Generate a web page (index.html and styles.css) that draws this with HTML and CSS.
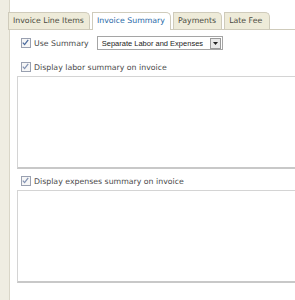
FILE: index.html
```html
<!DOCTYPE html>
<html lang="en">
<head>
  <meta charset="UTF-8" />
  <title>Invoice Summary</title>
  <link rel="stylesheet" href="styles.css">
</head>
<body>
  <div class="page">
    <div class="sidebar"></div>
    <div class="main">
      <ul class="tabs">
        <li class="tab">Invoice Line Items</li>
        <li class="tab active">Invoice Summary</li>
        <li class="tab">Payments</li>
        <li class="tab">Late Fee</li>
      </ul>

      <div class="panel">
        <div class="row">
          <label class="check">
            <span class="box"><svg viewBox="0 0 9 9" width="9" height="9"><path d="M1.8 4.6 L3.6 6.6 L7.2 1.8" fill="none" stroke="#4a6a9e" stroke-width="1.3"/></svg></span>
            Use Summary
          </label>
          <div class="select">
            <span class="select-text">Separate Labor and Expenses</span>
            <span class="select-btn"><svg viewBox="0 0 5 3" width="5" height="3"><path d="M0 0 H5 L2.5 3 Z" fill="#222"/></svg></span>
          </div>
        </div>

        <label class="check option">
          <span class="box"><svg viewBox="0 0 9 9" width="9" height="9"><path d="M1.8 4.6 L3.6 6.6 L7.2 1.8" fill="none" stroke="#8494b4" stroke-width="1.3"/></svg></span>
          Display labor summary on invoice
        </label>
        <textarea class="summary"></textarea>

        <label class="check option">
          <span class="box"><svg viewBox="0 0 9 9" width="9" height="9"><path d="M1.8 4.6 L3.6 6.6 L7.2 1.8" fill="none" stroke="#8494b4" stroke-width="1.3"/></svg></span>
          Display expenses summary on invoice
        </label>
        <textarea class="summary"></textarea>
      </div>
    </div>
  </div>
</body>
</html>
```

FILE: styles.css
```css
body {
  margin: 0;
  background: #fff;
  font-family: "DejaVu Sans", Verdana, sans-serif;
  font-size: 7.8px;
  color: #4a4a4a;
  overflow: hidden;
}
.page {
  display: flex;
  height: 300px;
}
.sidebar {
  width: 9px;
  flex: none;
  background: #efede2;
  border-right: 1px solid #d9d6c8;
}
.main {
  flex: none;
  width: 310px;
}
.tabs {
  list-style: none;
  margin: 12px 0 0 -2px;
  padding: 0;
  display: flex;
  gap: 2px;
  border-bottom: 1px solid #cfcbbb;
  height: 17px;
}
.tab {
  height: 16px;
  line-height: 16px;
  padding: 0 5px 0 4px;
  background: #eeebd9;
  border: 1px solid #cfcbbb;
  border-bottom: none;
  border-radius: 0 5px 0 0;
  color: #4d4d42;
}
.tab:last-child {
  padding-right: 7px;
}
.tab.active {
  background: #fff;
  height: 17px;
  color: #2a6aa8;
}
.panel {
  padding: 6px 0 0 7px;
}
.row {
  display: flex;
  align-items: center;
  height: 14px;
}
.check {
  display: flex;
  align-items: center;
  gap: 3px;
  margin-left: 4px;
}
.box {
  width: 8px;
  height: 8px;
  border: 1px solid #99a0b0;
  background: #f6f6f6;
  display: flex;
}
.box svg {
  margin: -1px 0 0 -1px;
}
.select {
  margin-left: 8px;
  width: 124px;
  height: 12px;
  border: 1px solid #a5a5a5;
  display: flex;
  align-items: center;
  justify-content: space-between;
  font-family: "Liberation Sans", Arial, sans-serif;
  font-size: 7.5px;
  color: #222;
}
.select-text {
  padding-left: 4px;
}
.select-btn {
  width: 9px;
  height: 9px;
  margin-right: 1px;
  background: #e8e8e8;
  border: 1px solid #9a9a9a;
  display: flex;
  align-items: center;
  justify-content: center;
}
.option {
  margin-top: 12px;
  height: 10px;
}
.summary + .option {
  margin-top: 7px;
}
.summary {
  display: block;
  box-sizing: border-box;
  margin: 4px 0 0 0;
  width: 300px;
  height: 93px;
  border: 1px solid #d4d4d4;
  border-bottom: 2px solid #c8c8c8;
  resize: none;
  padding: 0;
}
```
